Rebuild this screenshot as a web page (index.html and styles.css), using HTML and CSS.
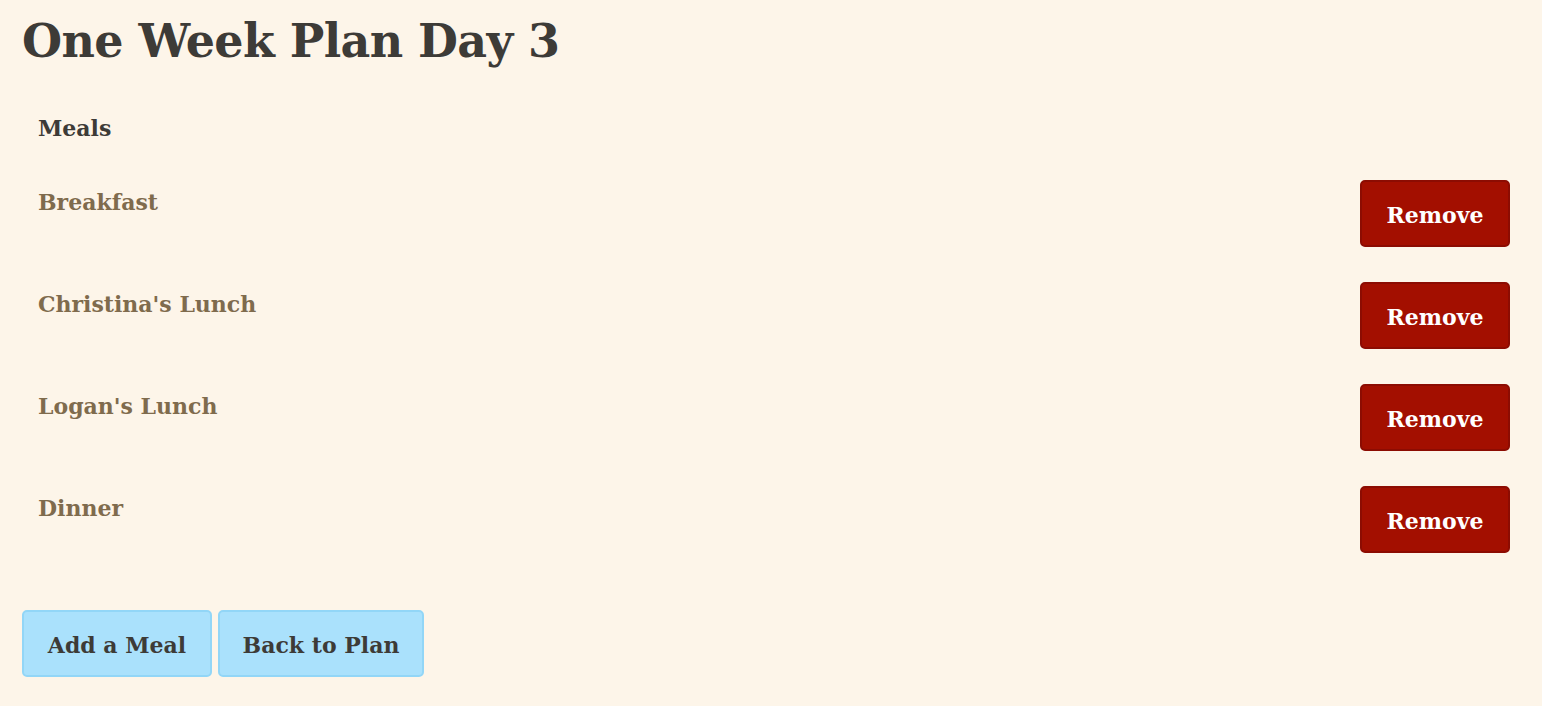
FILE: index.html
```html
<!DOCTYPE html>
<html>
<head>
<meta charset="utf-8">
<link rel="stylesheet" href="styles.css">
</head>
<body>
<div class="page">
  <h1 class="title">One Week Plan Day 3</h1>
  <div class="meals">
    <div class="meals-heading">Meals</div>
    <div class="meal-row">
      <span class="meal-name">Breakfast</span>
      <button class="btn btn-remove">Remove</button>
    </div>
    <div class="meal-row">
      <span class="meal-name">Christina's Lunch</span>
      <button class="btn btn-remove">Remove</button>
    </div>
    <div class="meal-row">
      <span class="meal-name">Logan's Lunch</span>
      <button class="btn btn-remove">Remove</button>
    </div>
    <div class="meal-row">
      <span class="meal-name">Dinner</span>
      <button class="btn btn-remove">Remove</button>
    </div>
  </div>
  <div class="actions">
    <button class="btn btn-blue btn-add">Add a Meal</button>
    <button class="btn btn-blue btn-back">Back to Plan</button>
  </div>
</div>
</body>
</html>
```

FILE: styles.css
```css
html, body {
  margin: 0;
  padding: 0;
  background: #fdf5e9;
}
body {
  font-family: "DejaVu Serif", "Liberation Serif", serif;
  color: #3d3b37;
}
.page {
  padding: 0 32px 0 22px;
}
.title {
  margin: 0;
  padding-top: 3px;
  font-size: 46px;
  font-weight: bold;
  line-height: 76px;
  letter-spacing: -0.6px;
  color: #3d3b37;
}
.meals {
  padding: 31px 0 0 16px;
}
.meals-heading {
  font-size: 22px;
  font-weight: bold;
  line-height: 36px;
  color: #3d3b37;
  margin-bottom: 34px;
}
.meal-row {
  display: flex;
  justify-content: space-between;
  align-items: flex-start;
  margin-bottom: 35px;
}
.meal-name {
  margin-top: 4px;
  font-size: 22px;
  line-height: 36px;
  color: #7f6b4d;
  font-weight: bold;
}
.btn {
  font-family: "DejaVu Serif", "Liberation Serif", serif;
  font-weight: bold;
  font-size: 22px;
  height: 67px;
  border-radius: 5px;
  border: 2px solid;
  cursor: pointer;
  padding: 3px 0 0;
}
.btn-remove {
  width: 150px;
  background: #a30f00;
  border-color: #8c0c02;
  color: #ffffff;
}
.actions {
  display: flex;
  gap: 6px;
  padding-top: 22px;
}
.btn-blue {
  background: #aae1fc;
  border-color: #92d6f7;
  color: #3d3b37;
}
.btn-add { width: 190px; }
.btn-back { width: 206px; }
```
